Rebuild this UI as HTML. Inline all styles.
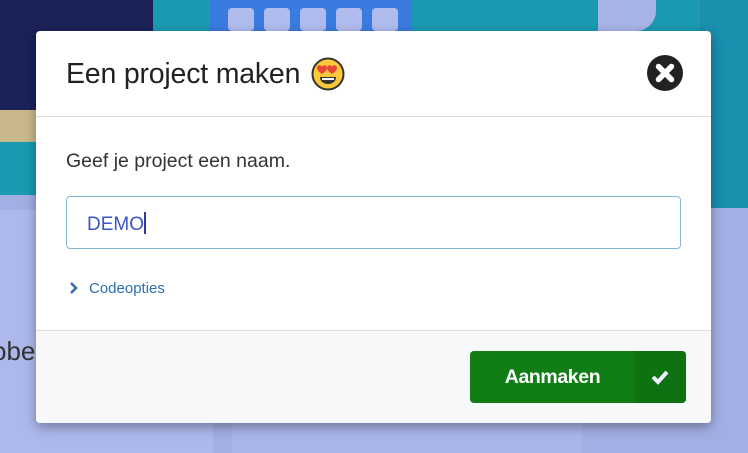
<!DOCTYPE html>
<html><head><style>
*{margin:0;padding:0;box-sizing:border-box}
body{width:748px;height:453px;overflow:hidden;position:relative;font-family:"Liberation Sans",sans-serif;background:#a3afe4}
.abs{position:absolute}
</style></head><body>
<div class="abs" style="left:0;top:0;width:748px;height:195px;background:#1a9bb2"></div>
<div class="abs" style="left:700px;top:0;width:48px;height:208px;background:#1a8fae"></div>
<div class="abs" style="left:0;top:0;width:153px;height:140px;background:#1a2258"></div>
<div class="abs" style="left:0;top:110px;width:36px;height:32px;background:#c9b98a"></div>
<div class="abs" style="left:210px;top:0;width:202px;height:31px;background:#3a7be0"></div>
<div class="abs" style="left:228px;top:8px;width:26px;height:23px;background:#b0bcee;border-radius:4px"></div>
<div class="abs" style="left:264px;top:8px;width:26px;height:23px;background:#b0bcee;border-radius:4px"></div>
<div class="abs" style="left:300px;top:8px;width:26px;height:23px;background:#b0bcee;border-radius:4px"></div>
<div class="abs" style="left:336px;top:8px;width:26px;height:23px;background:#b0bcee;border-radius:4px"></div>
<div class="abs" style="left:372px;top:8px;width:26px;height:23px;background:#b0bcee;border-radius:4px"></div>
<div class="abs" style="left:598px;top:0;width:58px;height:31px;background:#a8b4e8;border-radius:0 0 20px 0"></div>
<div class="abs" style="left:0;top:210px;width:213px;height:243px;background:#adb9ec"></div>
<div class="abs" style="left:232px;top:210px;width:350px;height:243px;background:#aab6ea"></div>
<div class="abs" style="left:-8px;top:336px;font-size:26px;color:#333">obe</div>

<div class="abs" style="left:36px;top:31px;width:675px;height:392px;background:#fff;border-radius:4px;box-shadow:0 4px 12px rgba(0,0,0,.35);overflow:hidden">
  <div class="abs" style="left:30px;top:27px;font-size:28.5px;color:#222;letter-spacing:-0.2px">Een project maken</div>
  <svg class="abs" style="left:275px;top:26px" width="34" height="34" viewBox="0 0 34 34">
    <circle cx="17" cy="17" r="15.5" fill="#fcc93a" stroke="#333" stroke-width="2"/>
    <path d="M7 12c0-3 4-4 5-1 1-3 5-2 5 1 0 3-5 6-5 6s-5-3-5-6zM17 12c0-3 4-4 5-1 1-3 5-2 5 1 0 3-5 6-5 6s-5-3-5-6z" fill="#e8483a" transform="translate(-1,-1)"/>
    <path d="M9 20h16c0 5-4 7-8 7s-8-2-8-7z" fill="#333"/>
    <path d="M11 21h12v2H11z" fill="#fff"/>
  </svg>
  <svg class="abs" style="left:611px;top:24px" width="36" height="36" viewBox="0 0 36 36">
    <circle cx="18" cy="18" r="18" fill="#222"/>
    <path d="M11.5 11.5l13 13M24.5 11.5l-13 13" stroke="#fff" stroke-width="5.5" stroke-linecap="round"/>
  </svg>
  <div class="abs" style="left:0;top:85px;width:675px;height:1px;background:#ddd"></div>
  <div class="abs" style="left:30px;top:119px;font-size:19.5px;color:#333">Geef je project een naam.</div>
  <div class="abs" style="left:30px;top:165px;width:615px;height:53px;border:1px solid #85b7d9;border-radius:4px"></div>
  <div class="abs" style="left:51px;top:181px;font-size:19px;color:#3a56c4">DEMO<span style="display:inline-block;width:2px;height:22px;background:#2a3a9a;vertical-align:-4px"></span></div>
  <svg class="abs" style="left:33px;top:250px" width="10" height="14" viewBox="0 0 10 14"><path d="M2 2l5 5-5 5" stroke="#2f6fb0" stroke-width="2.5" fill="none"/></svg>
  <div class="abs" style="left:53px;top:249px;font-size:15px;color:#2f6fb0">Codeopties</div>
  <div class="abs" style="left:0;top:299px;width:675px;height:93px;background:#f7f8fa;border-top:1px solid #ddd"></div>
  <div class="abs" style="left:434px;top:320px;width:216px;height:52px;background:#117d15;border-radius:4px;overflow:hidden">
    <div class="abs" style="left:165px;top:0;width:51px;height:52px;background:#0f7212"></div>
    <div class="abs" style="left:0;top:15px;width:165px;text-align:center;color:#fff;font-weight:bold;font-size:19.5px;letter-spacing:-0.4px">Aanmaken</div>
    <svg class="abs" style="left:181px;top:18px" width="18" height="16" viewBox="0 0 18 16"><path d="M2 8l5 5 9-10" stroke="#eef" stroke-width="4" fill="none"/></svg>
  </div>
</div>
</body></html>
